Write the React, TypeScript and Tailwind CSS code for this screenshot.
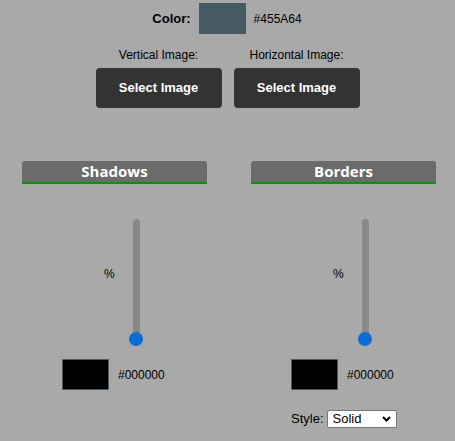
export default function App() {
  const panels = ['Shadows', 'Borders'];

  return (
    <div className="w-[455px] h-[441px] overflow-hidden bg-[#a9a9a9] text-black font-['Liberation_Sans',Arial,sans-serif]">
      {/* color row */}
      <div className="flex justify-center items-center pt-[3px] pr-[1px]">
        <span className="text-[13px] font-bold">Color:</span>
        <div className="ml-[8px] w-[47px] h-[31px] bg-[#455A64]" />
        <span className="ml-[8px] text-[12px]">#455A64</span>
      </div>

      {/* image pickers */}
      <div className="flex justify-center gap-[12px] mt-[14px]">
        {['Vertical Image:', 'Horizontal Image:'].map((label) => (
          <div key={label} className="flex flex-col items-center w-[126px]">
            <span className="text-[12px] leading-[14px]">{label}</span>
            <button className="mt-[6px] w-[126px] h-[40px] rounded-[4px] bg-[#333333] text-white text-[13px] font-bold">
              Select Image
            </button>
          </div>
        ))}
      </div>

      {/* panels */}
      <div className="flex pl-[22px] gap-[44px] mt-[53px]">
        {panels.map((title) => (
          <div key={title} className="w-[185px] flex flex-col">
            <div className="h-[23px] rounded-t-[3px] bg-[#6b6b6b] border-b-2 border-[#0a930a] flex items-center justify-center text-white text-[15px] font-bold font-['Open_Sans',sans-serif]">
              {title}
            </div>

            <div className="flex items-start mt-[35px]">
              <span className="ml-[82px] mt-[48px] text-[12px] leading-[14px] w-[10px]">%</span>
              <div className="relative ml-[15px] w-[14px] h-[127px] flex justify-center">
                <div className="w-[7px] h-[120px] rounded-full bg-[#888888]" />
                <div className="absolute left-0 bottom-0 w-[14px] h-[14px] rounded-full bg-[#0a6cd6]" />
              </div>
            </div>

            <div className="flex items-center mt-[13px] ml-[40px]">
              <div className="w-[47px] h-[31px] bg-black border border-[#4d5a63]" />
              <span className="ml-[9px] text-[12px]">#000000</span>
            </div>

            {title === 'Borders' && (
              <div className="flex items-center mt-[19px] ml-[40px]">
                <span className="text-[13px]">Style:</span>
                <div className="ml-[3px] w-[70px] h-[18px] bg-white border border-[#767676] rounded-[2px] flex items-center justify-between pl-[5px] pr-[5px]">
                  <span className="text-[13px] leading-none">Solid</span>
                  <svg width="9" height="6" viewBox="0 0 9 6">
                    <path d="M1 1 L4.5 4.5 L8 1" fill="none" stroke="black" strokeWidth="2" />
                  </svg>
                </div>
              </div>
            )}
          </div>
        ))}
      </div>
    </div>
  );
}
